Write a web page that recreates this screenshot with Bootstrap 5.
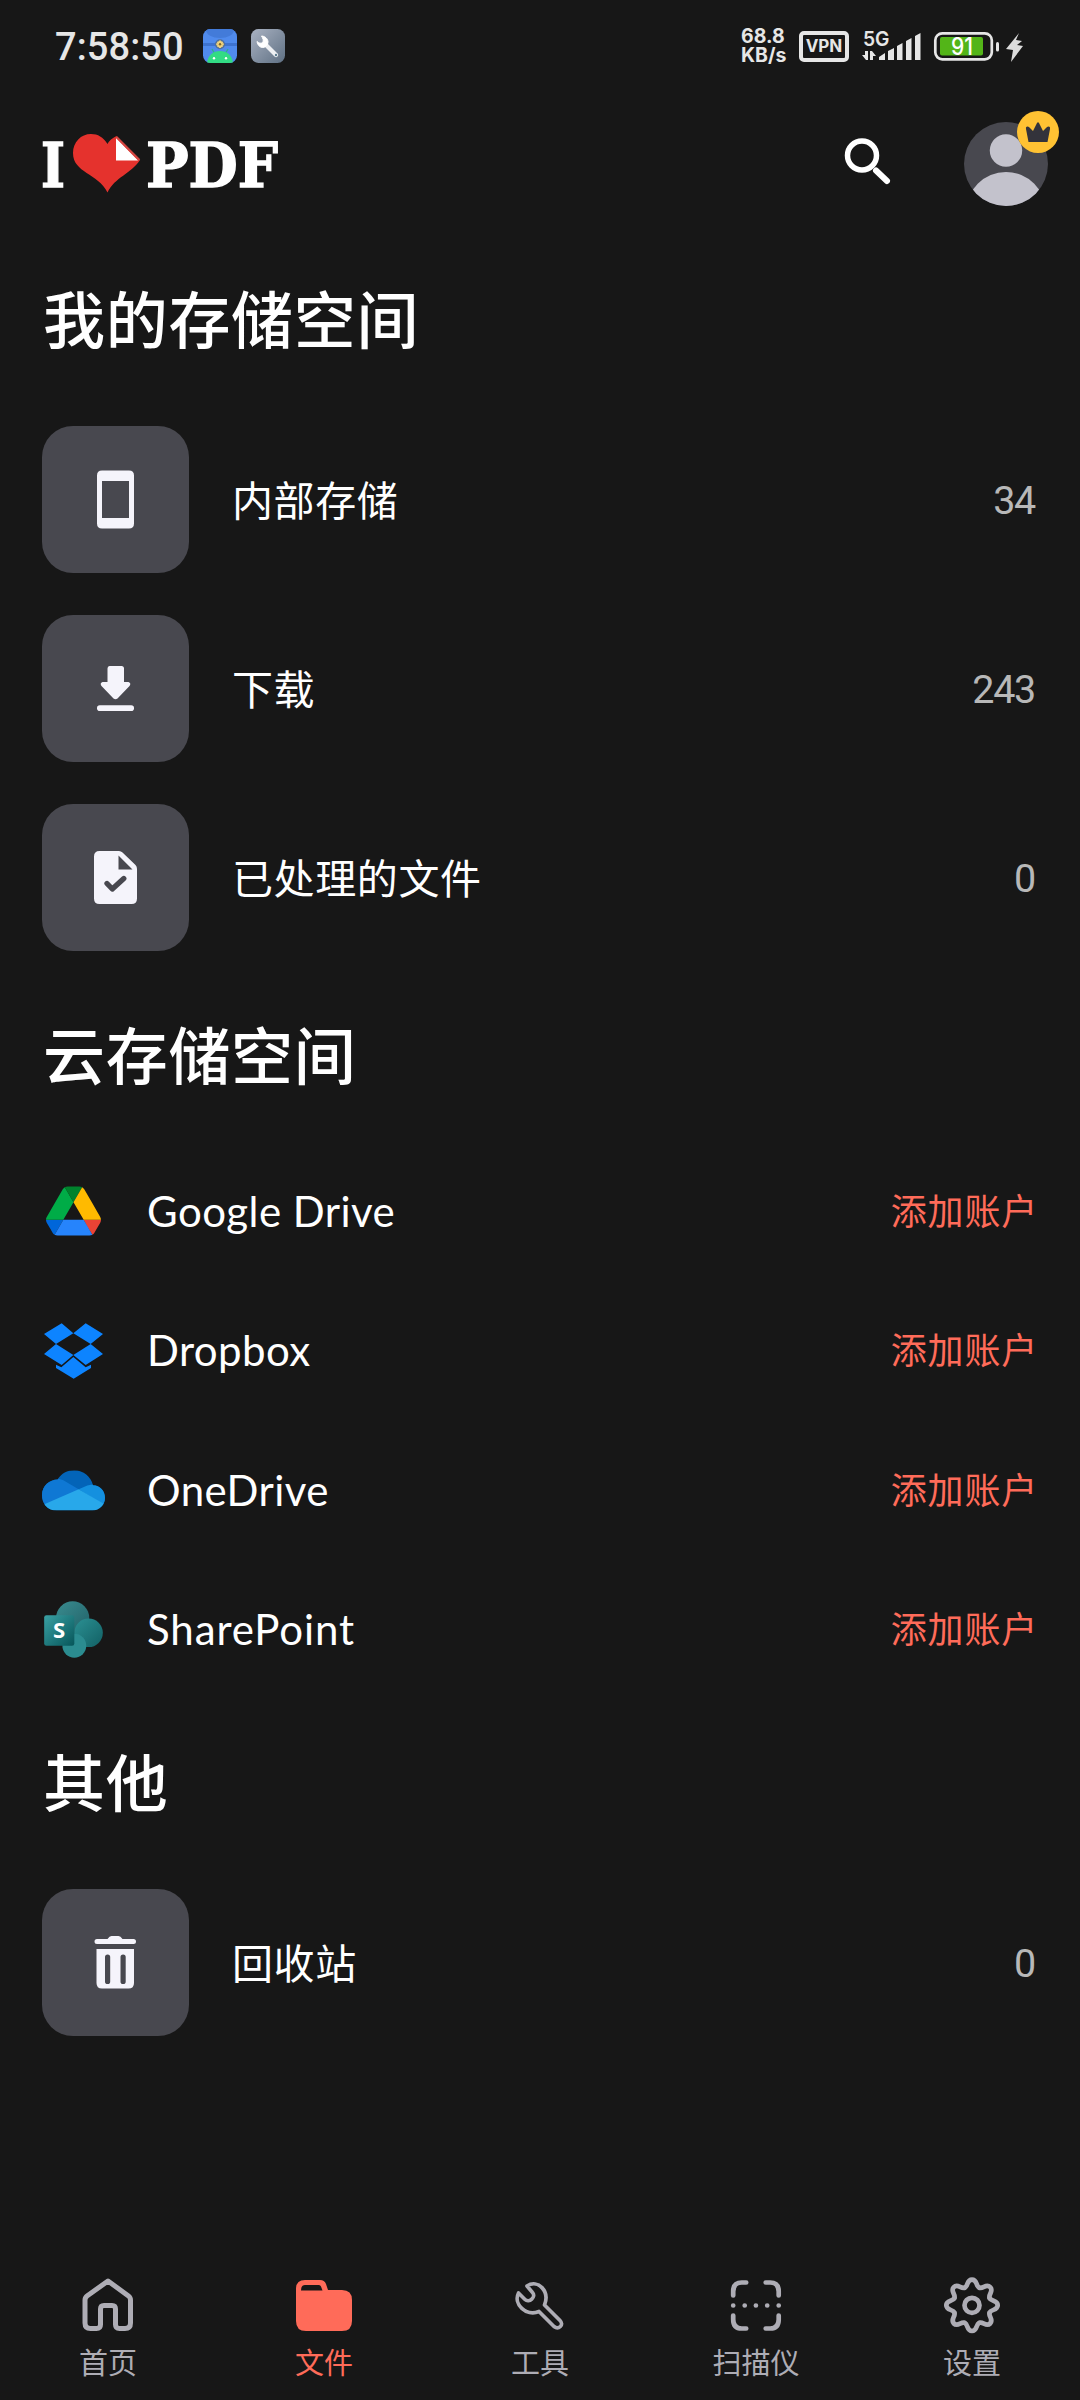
<!DOCTYPE html>
<html lang="zh-CN">
<head>
<meta charset="utf-8">
<meta name="viewport" content="width=device-width, initial-scale=1">
<title>iLovePDF</title>
<link href="https://cdn.jsdelivr.net/npm/bootstrap@5.3.0/dist/css/bootstrap.min.css" rel="stylesheet">
<style>
body{background:#171717;color:#fff;font-family:Roboto,"Noto Sans CJK SC",sans-serif;font-size:42px;line-height:1}
svg{display:block;flex-shrink:0;overflow:visible}
.screen{width:1080px;height:2400px;overflow:hidden}
.status-bar{height:92px;padding:0 57px 0 55px;color:#e6e6e6}
.clock{font-size:38px;font-weight:500;letter-spacing:.1px;width:148px;padding-top:2px}
.net-speed{font-family:Inter,sans-serif;font-weight:700;font-size:19.5px;line-height:19px;width:58px}
.net-speed div{white-space:nowrap}
.vpn-tag{width:50px;height:31px;border:4px solid #e6e6e6;border-radius:5px;font:700 17px/23px Inter,sans-serif;text-align:center;margin-right:13px}
.top-bar{height:144px;padding:0 32px 0 42px}
.avatar{width:84px;height:84px}
.crown{top:-11px;right:-11px}
.section-title{height:169px;padding:0 42px 6px 43px;font-family:"Noto Sans CJK SC",sans-serif;font-weight:500;font-size:62px;letter-spacing:.7px}
.storage-row{height:189px;padding:0 42px}
.tile{width:147px;height:147px;border-radius:31px;background:#48484f}
.row-label{margin-left:43px;padding-bottom:3px;font-family:"Noto Sans CJK SC",sans-serif;font-size:41px;letter-spacing:.6px}
.count{font-size:39.5px;letter-spacing:-1.3px;color:#b8b8b8;padding:3px 3px 0 0}
.cloud-row{height:139.5px;padding:0 42px}
.cloud-row .logo-box{padding-top:1px}
.logo-box{width:63px;margin-right:42px}
.cloud-name{font-family:Lato,sans-serif;font-size:42px;letter-spacing:.45px}
.add-link{font-family:"Noto Sans CJK SC",sans-serif;font-size:36px;letter-spacing:.8px;color:#ff6b59;text-decoration:none;padding-bottom:4px}
.tab-bar{height:154px}
.tab-bar a{color:#aeadb5;text-decoration:none;font-family:"Noto Sans CJK SC",sans-serif;font-size:29px;padding-top:26px}
.tab-bar a.active{color:#ff6b59}
.tab-bar span{margin-top:9px}
</style>
</head>
<body>
<div class="screen d-flex flex-column">
<div class="status-bar d-flex align-items-center">
  <div class="clock">7:58:50</div>
  <svg width="34" height="34" viewBox="0 0 34 34"><defs><clipPath id="appClip"><rect width="34" height="34" rx="7.5"/></clipPath></defs><g clip-path="url(#appClip)"><rect width="34" height="34" fill="#508bed"/><ellipse cx="17" cy="1" rx="14" ry="8" fill="#437bd9"/><path d="M0 14h34v3H0z" fill="#3e73cf"/><circle cx="17" cy="15.3" r="5" fill="#4f6f9e"/><path d="M17 11.5v7.6M13.2 15.3h7.6M14.5 12.7l5 5M19.5 12.7l-5 5" stroke="#efd27b" stroke-width="2"/><circle cx="17" cy="15.3" r="1.2" fill="#80672a"/><path d="M9 20l3 5M25 20l-3 5" stroke="#2fae8f" stroke-width="1.4"/><path d="M4 34C5 26 10 22 17 22s12 4 13 12z" fill="#32dc84"/><circle cx="11" cy="29.3" r="1.2" fill="#fff"/><circle cx="23" cy="29.3" r="1.2" fill="#fff"/></g></svg>
  <svg style="margin-left:14px" width="34" height="34" viewBox="0 0 34 34"><defs><linearGradient id="gw" x1="0" y1="0" x2="1" y2="1"><stop stop-color="#a9b2c2"/><stop offset="1" stop-color="#5f7083"/></linearGradient></defs><rect width="34" height="34" rx="7.5" fill="url(#gw)"/><path d="M15 16l10 10" stroke="#eef0f3" stroke-width="4.200" stroke-linecap="round"/><path d="M10.500 7C13.500 7 17 9.500 17 13S14 18.500 11.500 18.500 6.500 16 6 12.500c1.500 1.500 4 2.500 5.500 1 1.500-1.600.5-4-1-6.500z" fill="#fff" stroke="#fff" stroke-linejoin="round"/><circle cx="25" cy="26" r="1.200" fill="#5d7d91"/></svg>
  <div class="net-speed ms-auto"><div>68.8</div><div>KB/s</div></div>
  <div class="vpn-tag">VPN</div>
  <svg width="60" height="32" viewBox="862 29 60 32" fill="#e6e6e6"><text x="863" y="44.500" font-family="Inter,sans-serif" font-weight="600" font-size="20.500" textLength="26.500" lengthAdjust="spacingAndGlyphs">5G</text><path d="M868 50v9h-2l-4-5h3v-4zM870 59v-9h2l4 5h-3v4zM879 59v-3l6-4v7zM888 59v-9l6-3v12zM897 59V45l5.500-3v17zM906 59V40l5.500-3v22zM915 59V35l5.500-3v27z"/></svg>
  <svg style="margin-left:12px" width="89" height="32" viewBox="934 29 89 32"><rect x="935.3" y="32.300" width="56.500" height="26" rx="7" fill="none" stroke="#e6e6e6" stroke-width="2.700"/><rect x="940" y="36" width="43" height="18.500" rx="2" fill="#53b518"/><text x="951" y="54" font-family="Inter,sans-serif" font-weight="500" font-size="24" textLength="22" lengthAdjust="spacingAndGlyphs" fill="#fff">91</text><rect x="996" y="41" width="3" height="9.500" rx="1.500" fill="#e6e6e6"/><path d="M1019 32l-13 16 7 1-2 12 12-16-6-1 5-4-6-1z" fill="#dcdcdc"/></svg>
</div>
<header class="top-bar d-flex align-items-center">
  <svg width="240" height="66" viewBox="42 131 240 66"><g font-family="DejaVu Serif,serif" font-weight="700" font-size="62" fill="#fff" stroke="#fff" stroke-width="1.500"><text x="41" y="186.500" textLength="24" lengthAdjust="spacingAndGlyphs">I</text><text x="146" y="186.500" textLength="132" lengthAdjust="spacingAndGlyphs">PDF</text></g><path d="M107.500 144C103 137 98 134 91 134c-10 0-18 8-18 19 0 20 25 20 34.500 39.500C115 177 131 174 140 160L116.500 136Q110 139 107.500 144z" fill="#e5322d"/><path d="M116 138v22.500h22z" fill="#fff"/><path d="M116.500 137L139.500 160" stroke="#d54742" stroke-width="2"/></svg>
  <svg class="ms-auto" style="margin-right:67px" width="60" height="60" viewBox="837 134 60 60" fill="none" stroke="#fff"><circle cx="862" cy="155.500" r="14.500" stroke-width="5.500"/><path d="M876 170.500L887 181" stroke-width="6" stroke-linecap="round"/></svg>
  <div class="avatar position-relative">
    <svg width="84" height="84" viewBox="0 0 84 84"><defs><clipPath id="av"><circle cx="42" cy="42" r="42"/></clipPath></defs><g clip-path="url(#av)"><rect width="84" height="84" fill="#48484f"/><circle cx="42" cy="28.500" r="16.200" fill="#c3c2cc"/><circle cx="42" cy="90" r="40" fill="#c3c2cc"/></g></svg>
    <svg class="crown position-absolute" width="42" height="42" viewBox="0 0 42 42"><circle cx="21" cy="21" r="21" fill="#ffc233"/><path d="M11.500 31L9 18c-.5-3 2-3 3.500-1.500l3.500 3.500 4-8c.5-1 1.500-1 2 0l4 8 3.500-3.500c1.500-1.500 4-1.500 3.500 1.500L30.500 31z" fill="#33333b"/></svg>
  </div>
</header>
<main class="flex-grow-1">
  <h1 class="section-title m-0 d-flex align-items-center">我的存储空间</h1>
  <div class="storage-row d-flex align-items-center"><div class="tile"><svg width="147" height="147" viewBox="42 426 147 147"><path fill="#f5f4fb" fill-rule="evenodd" d="M102 470.500h27q5 0 5 5v48q0 5-5 5h-27q-5 0-5-5v-48q0-5 5-5zM102 481v37h27v-37z"/></svg></div><div class="row-label">内部存储</div><div class="count ms-auto">34</div></div>
  <div class="storage-row d-flex align-items-center"><div class="tile"><svg width="147" height="147" viewBox="42 615 147 147"><path fill="#f5f4fb" d="M109.500 666h12q2.500 0 2.500 2.500V682h4.500q3 1 1 4L117.500 698.500q-2 1.500-4 0L101.500 686q-2-3 1-4h5v-13.500q0-2.500 2-2.500z"/><rect x="97" y="705.300" width="37" height="5.700" rx="2.800" fill="#f5f4fb"/></svg></div><div class="row-label">下载</div><div class="count ms-auto">243</div></div>
  <div class="storage-row d-flex align-items-center"><div class="tile"><svg width="147" height="147" viewBox="42 804 147 147"><path fill="#f5f4fb" fill-rule="evenodd" d="M99.500 851H119q2 0 3.500 1.500L135.500 865q1.500 1.500 1.500 4v29.500q0 5.500-5.500 5.500h-32q-5.500 0-5.500-5.500v-42q0-5.500 5.500-5.500zM118.500 855.500V869.500H132.500z"/><path d="M107 883.500l5.300 5.500 11.500-10.500" fill="none" stroke="#48484f" stroke-width="5.300" stroke-linecap="round" stroke-linejoin="round"/></svg></div><div class="row-label">已处理的文件</div><div class="count ms-auto">0</div></div>

  <h2 class="section-title m-0 d-flex align-items-center">云存储空间</h2>
  <div class="cloud-row d-flex align-items-center"><div class="logo-box"><svg class="mx-auto" width="55" height="50" viewBox="0 0 87.300 78"><path d="m6.600 66.850 3.850 6.650c.8 1.400 1.950 2.500 3.300 3.300l13.750-23.800h-27.500c0 1.550.4 3.100 1.200 4.500z" fill="#0066da"/><path d="m43.650 25-13.750-23.800c-1.350.8-2.500 1.900-3.300 3.300l-25.400 44a9.060 9.060 0 0 0-1.200 4.500h27.500z" fill="#00ac47"/><path d="m73.550 76.800c1.350-.8 2.500-1.900 3.300-3.300l1.600-2.750 7.650-13.250c.8-1.400 1.200-2.950 1.200-4.500h-27.502l5.852 11.500z" fill="#ea4335"/><path d="m43.650 25 13.750-23.800c-1.350-.8-2.900-1.200-4.500-1.200h-18.500c-1.600 0-3.150.45-4.500 1.200z" fill="#00832d"/><path d="m59.800 53h-32.300l-13.750 23.800c1.350.8 2.900 1.200 4.500 1.200h50.800c1.600 0 3.150-.45 4.500-1.200z" fill="#2684fc"/><path d="m73.400 26.500-12.700-22c-.8-1.400-1.950-2.500-3.300-3.300l-13.750 23.800 16.150 28h27.450c0-1.550-.4-3.100-1.200-4.500z" fill="#ffba00"/></svg></div><div class="cloud-name">Google Drive</div><a class="add-link ms-auto" href="#">添加账户</a></div>
  <div class="cloud-row d-flex align-items-center"><div class="logo-box"><svg width="63" height="56" viewBox="126 68 189 168" fill="#0d84ff"><path d="M132 101l53-32 35 30-52 32zM220 99l37-30 52 32-37 30zM132 161l36-30 52 33-35 30zM220 164l52-33 37 30-52 33zM168 193l16 8 36-31 37 31 16-8v10l-52 32-53-32z"/></svg></div><div class="cloud-name">Dropbox</div><a class="add-link ms-auto" href="#">添加账户</a></div>
  <div class="cloud-row d-flex align-items-center"><div class="logo-box"><svg width="63" height="41" viewBox="126 512 189 122"><defs><clipPath id="od"><path d="M170 633C140 633 126 609 126 587 126 559 149 540 173 540 184 521 202 512 223 512 250 512 273 531 279 557 300 557 315 574 315 595 315 617 298 633 277 633z"/></clipPath></defs><g clip-path="url(#od)"><rect x="126" y="512" width="189" height="122" fill="#0364b8"/><path d="M126 530L172 536 190 542 236 569 200 610 126 620z" fill="#0f78d4"/><path d="M236 569L262 558Q271 555 285 555L315 560V620L306 613z" fill="#1490df"/><path d="M126 617L236 569 315 615V634H126z" fill="#28a8ea"/></g></svg></div><div class="cloud-name">OneDrive</div><a class="add-link ms-auto" href="#">添加账户</a></div>
  <div class="cloud-row d-flex align-items-center"><div class="logo-box"><svg width="63" height="57" viewBox="126 905 189 172"><defs><linearGradient id="s1" x1="0" y1="0" x2="1" y2="1"><stop stop-color="#3a8d90"/><stop offset="1" stop-color="#205f66"/></linearGradient><linearGradient id="s2" x1="0" y1="0" x2="1" y2="1"><stop stop-color="#2b9093"/><stop offset="1" stop-color="#126064"/></linearGradient><linearGradient id="s3" x1="0" y1="0" x2="1" y2="1"><stop stop-color="#3aa1a4"/><stop offset="1" stop-color="#065559"/></linearGradient></defs><circle cx="218" cy="956" r="50" fill="url(#s1)"/><circle cx="266" cy="1001" r="43" fill="url(#s2)"/><circle cx="223" cy="1040" r="36" fill="#2b8c90"/><rect x="132" y="948" width="91" height="92" rx="7" fill="url(#s3)"/><text x="177" y="1017" text-anchor="middle" font-family="Open Sans,sans-serif" font-weight="700" font-size="67" fill="#fff">S</text></svg></div><div class="cloud-name" style="letter-spacing:.9px">SharePoint</div><a class="add-link ms-auto" href="#">添加账户</a></div>

  <h2 class="section-title m-0 d-flex align-items-center">其他</h2>
  <div class="storage-row d-flex align-items-center"><div class="tile"><svg width="147" height="147" viewBox="42 1889 147 147" fill="#f5f4fb"><path d="M97 1939h10.500q2-3 4-3h7q2 0 4 3H133.500q2.500 0 2.500 2.500t-2.500 2.500H97q-2.500 0-2.500-2.500t2.500-2.500z"/><path fill-rule="evenodd" d="M96.500 1949H134v34q0 5.500-5.500 5.500h-26.500q-5.500 0-5.500-5.500zM105 1957v24.500a2.600 2.600 0 0 0 5.200 0V1957a2.600 2.600 0 0 0-5.200 0zM120.500 1957v24.500a2.600 2.600 0 0 0 5.200 0V1957a2.600 2.600 0 0 0-5.200 0z"/></svg></div><div class="row-label">回收站</div><div class="count ms-auto">0</div></div>
</main>
<nav class="tab-bar nav nav-justified flex-nowrap">
  <a class="nav-item d-flex flex-column align-items-center" href="#"><svg width="66" height="66" viewBox="74.500 2272 66 66" fill="none" stroke="currentColor" stroke-width="5" stroke-linejoin="round"><path d="M107.500 2281L128 2296q2 1.500 2 4V2323q0 5.500-5.500 5.500H119q-4 0-4-4V2309q0-3.500-3.500-3.500h-8q-3.500 0-3.500 3.500V2324.500q0 4-4 4h-6q-5.500 0-5.500-5.500V2300q0-2.500 2-4z"/></svg><span>首页</span></a>
  <a class="nav-item active d-flex flex-column align-items-center" href="#"><svg width="66" height="66" viewBox="291 2272 66 66" fill="currentColor"><path fill-rule="evenodd" d="M305 2280h15q4.500 0 6 4l2 6h14q10 0 10 10V2321q0 10-10 10h-36q-10 0-10-10V2289q0-9 9-9zM301 2290.500h21.500l-1.500-4q-.6-1.500-2-1.500h-14q-4 0-4 5.500z"/></svg><span>文件</span></a>
  <a class="nav-item d-flex flex-column align-items-center" href="#"><svg width="66" height="66" viewBox="507 2272 66 66" fill="none" stroke="currentColor" stroke-width="3.700" stroke-linejoin="round"><path d="M527 2286C538 2279 550 2291 544.500 2305L560 2320.500C564.500 2325 558.500 2330 554 2326.500L539 2311.500C526 2317 513 2304 518.500 2293L525 2299.500C529 2303.500 536.500 2297 532.500 2292.500z"/></svg><span>工具</span></a>
  <a class="nav-item d-flex flex-column align-items-center" href="#"><svg width="66" height="66" viewBox="723.300 2272 66 66" fill="none" stroke="currentColor" stroke-width="4.700" stroke-linecap="round"><path d="M733.500 2295.500V2291.500Q733.500 2282.500 742 2282.500H746.500M766 2282.500h4.500Q779 2282.500 779 2291.500V2295.500M733.500 2315.500V2319.500Q733.500 2328.500 742 2328.500H746.500M766 2328.500h4.500Q779 2328.500 779 2319.500V2315.500M733.500 2305.500h.01M745 2305.500h.01M756.200 2305.500h.01M767.500 2305.500h.01M779 2305.500h.01"/></svg><span>扫描仪</span></a>
  <a class="nav-item d-flex flex-column align-items-center" href="#"><svg width="66" height="66" viewBox="-33 -33.300 66 66" fill="none" stroke="currentColor" stroke-width="4.700" stroke-linecap="round"><defs><path id="tooth" d="M-7.300-17.600C-3.600-19.100-5.500-25.700 0-25.700C5.500-25.700 3.600-19.100 7.300-17.600"/></defs><use href="#tooth"/><use href="#tooth" transform="rotate(45)"/><use href="#tooth" transform="rotate(90)"/><use href="#tooth" transform="rotate(135)"/><use href="#tooth" transform="rotate(180)"/><use href="#tooth" transform="rotate(225)"/><use href="#tooth" transform="rotate(270)"/><use href="#tooth" transform="rotate(315)"/><circle r="7.500"/></svg><span>设置</span></a>
</nav>
</div>
<script src="https://cdn.jsdelivr.net/npm/bootstrap@5.3.0/dist/js/bootstrap.bundle.min.js"></script>
</body>
</html>
